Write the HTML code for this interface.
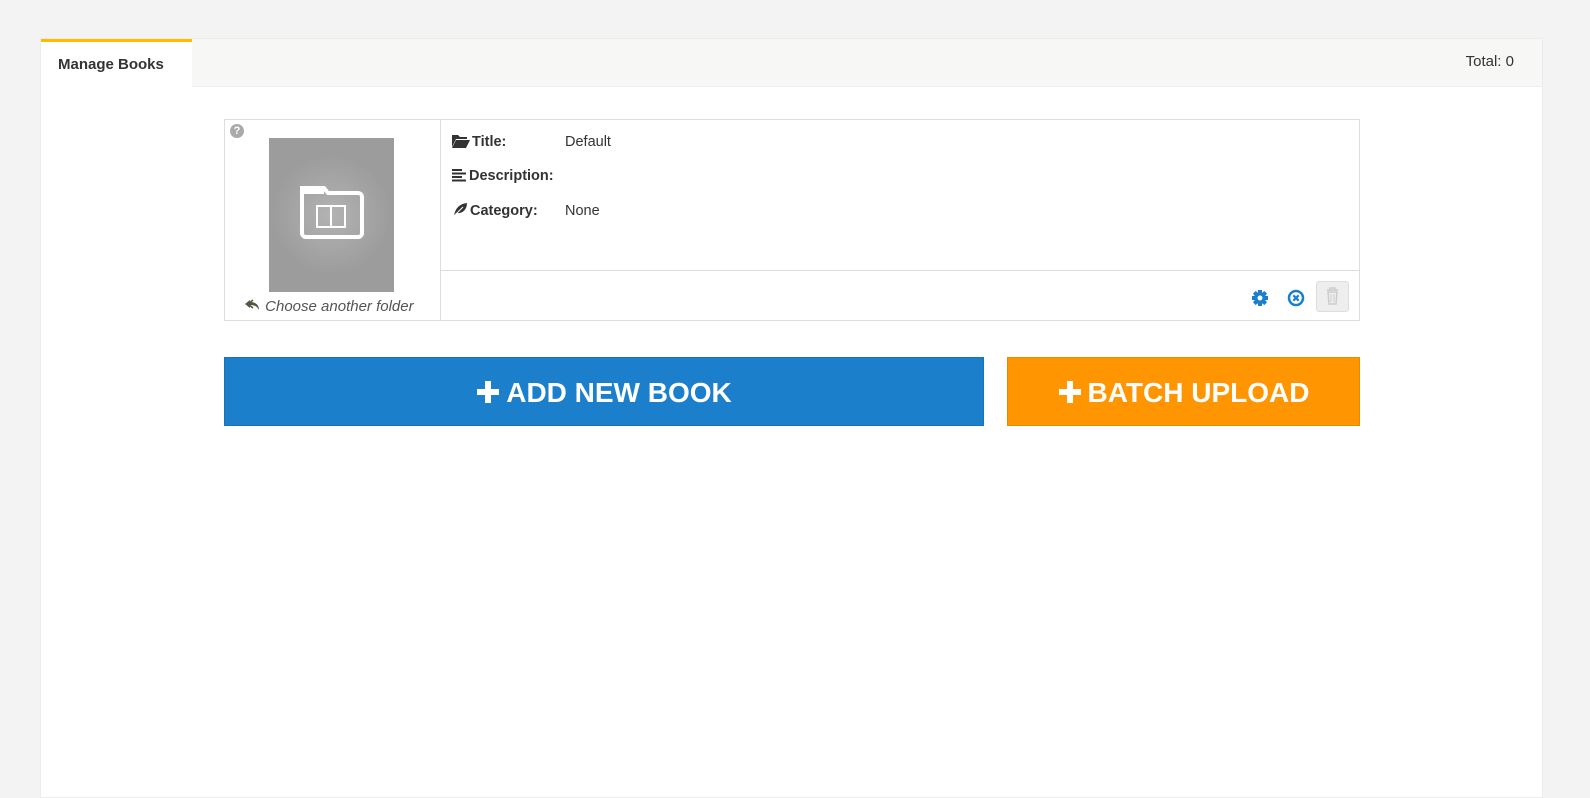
<!DOCTYPE html>
<html><head><style>
body{margin:0;width:1590px;height:784px;background:#f3f3f3;font-family:"Liberation Sans",sans-serif;overflow:hidden;position:relative}
.panel{position:absolute;left:40px;top:38px;width:1503px;height:760px;background:#fff;border:1px solid #ececec;box-sizing:border-box}
.hdr{position:absolute;left:0;top:0;width:100%;height:47px;background:#f7f7f6;border-bottom:1px solid #eee}
.tab{position:absolute;left:0;top:0;width:151px;height:48px;background:#fff;border-top:3px solid #ffbb00;box-sizing:border-box;font-weight:bold;font-size:15px;color:#333;padding:14px 0 0 17px}
.total{position:absolute;right:28px;top:14px;font-size:15px;color:#333}
.card{position:absolute;left:224px;top:119px;width:1136px;height:202px;border:1px solid #ddd;box-sizing:border-box}
.left{position:absolute;left:0;top:0;width:215px;height:200px;border-right:1px solid #ddd}
.img{position:absolute;left:44px;top:18px;width:125px;height:154px;background:radial-gradient(circle at 50% 50%,#b3b3b3,#9c9c9c 60%)}
.q{position:absolute;left:5px;top:4px;width:14px;height:14px;border-radius:50%;background:#aaa;color:#fff;font-size:11px;font-weight:bold;text-align:center;line-height:14px}
.choose{position:absolute;left:20px;top:178px;font-size:15px;font-style:italic;color:#555}
.row{position:absolute;left:227px;font-size:14.5px;color:#333}
.row b{display:inline-block;width:113px}
.row svg{vertical-align:-2px;margin-right:2px}
.div{position:absolute;left:215px;right:0;top:150px;border-top:1px solid #ddd}
.btn{position:absolute;top:357px;height:69px;color:#fff;font-weight:bold;font-size:28px;text-align:center;line-height:69px;box-sizing:border-box}
.btn svg{vertical-align:-2px;margin-right:6px}
</style></head><body>
<div class="panel"><div class="hdr"></div><div class="tab">Manage Books</div><div class="total">Total: 0</div></div>
<div class="card">
<div class="left"><div class="q">?</div>
<div class="img"><svg width="125" height="154" viewBox="0 0 125 154"><path d="M33 50h22l4 5h30a4 4 0 0 1 4 4v36a4 4 0 0 1-4 4H37a4 4 0 0 1-4-4z" fill="none" stroke="#fff" stroke-width="4"/><rect x="33" y="50" width="22" height="6" fill="#fff"/><path d="M48 68h14v21H48zM62 68h14v21H62z" fill="none" stroke="#fff" stroke-width="2"/></svg></div>
<div class="choose"><svg width="16" height="12" viewBox="0 0 16 12" style="vertical-align:0"><path d="M5 1L0 5l5 4V6c4 0 7 1 9 5 0-5-3-8-9-8z" fill="#554"/><path d="M8 1L3 5l5 4" fill="none" stroke="#554" stroke-width="1.5"/></svg> Choose another folder</div></div>
<div class="row" style="top:14px"><b><svg width="18" height="14" viewBox="0 0 18 14"><path d="M0 1h6l2 2h7v2H4L0 13z" fill="#333"/><path d="M4 6h14l-4 8H0z" fill="#333"/></svg>Title:</b>Default</div>
<div class="row" style="top:48px"><b><svg width="15" height="13" viewBox="0 0 15 13"><path d="M0 1h10M0 4.5h14M0 8h10M0 11.5h14" stroke="#333" stroke-width="2"/></svg>Description:</b></div>
<div class="row" style="top:82px"><b><svg width="16" height="15" viewBox="0 0 16 15"><path d="M2 14C3 8 6 2 15 1c0 7-5 11-11 10z" fill="#333"/><path d="M1 15L11 5" stroke="#fff" stroke-width="1"/></svg>Category:</b>None</div>
<div class="div"></div>
<svg style="position:absolute;left:1025px;top:168px" width="20" height="20" viewBox="0 0 20 20"><g fill="#1b7fcc"><circle cx="10" cy="10" r="6"/><rect x="8" y="2" width="4" height="16"/><rect x="2" y="8" width="16" height="4"/><rect x="8" y="2" width="4" height="16" transform="rotate(45 10 10)"/><rect x="8" y="2" width="4" height="16" transform="rotate(-45 10 10)"/></g><circle cx="10" cy="10" r="2.5" fill="#fff"/></svg>
<svg style="position:absolute;left:1061px;top:168px" width="20" height="20" viewBox="0 0 20 20"><circle cx="10" cy="10" r="7" fill="none" stroke="#1b7fcc" stroke-width="2.5"/><path d="M7.3 7.3l5.4 5.4M12.7 7.3l-5.4 5.4" stroke="#1b7fcc" stroke-width="2.2"/></svg>
<div style="position:absolute;left:1091px;top:161px;width:33px;height:31px;background:#eee;border:1px solid #ddd;border-radius:3px;box-sizing:border-box"><svg width="31" height="29" viewBox="0 0 31 29"><path d="M10 8h11M13 8V6h5v2M11 10h9l-1 12h-7z" fill="none" stroke="#ccc" stroke-width="1.5"/><path d="M14 12v8M17 12v8" stroke="#ccc"/></svg></div>
</div>
<div class="btn" style="left:224px;width:760px;background:#1c7fcb;border:1px solid #1a72b6"><svg width="24" height="24" viewBox="0 0 24 24"><path d="M9 1h6v8h8v6h-8v8H9v-8H1V9h8z" fill="#fff"/></svg>ADD NEW BOOK</div>
<div class="btn" style="left:1007px;width:353px;background:#ff9500;border:1px solid #e88900"><svg width="24" height="24" viewBox="0 0 24 24"><path d="M9 1h6v8h8v6h-8v8H9v-8H1V9h8z" fill="#fff"/></svg>BATCH UPLOAD</div>
</body></html>
